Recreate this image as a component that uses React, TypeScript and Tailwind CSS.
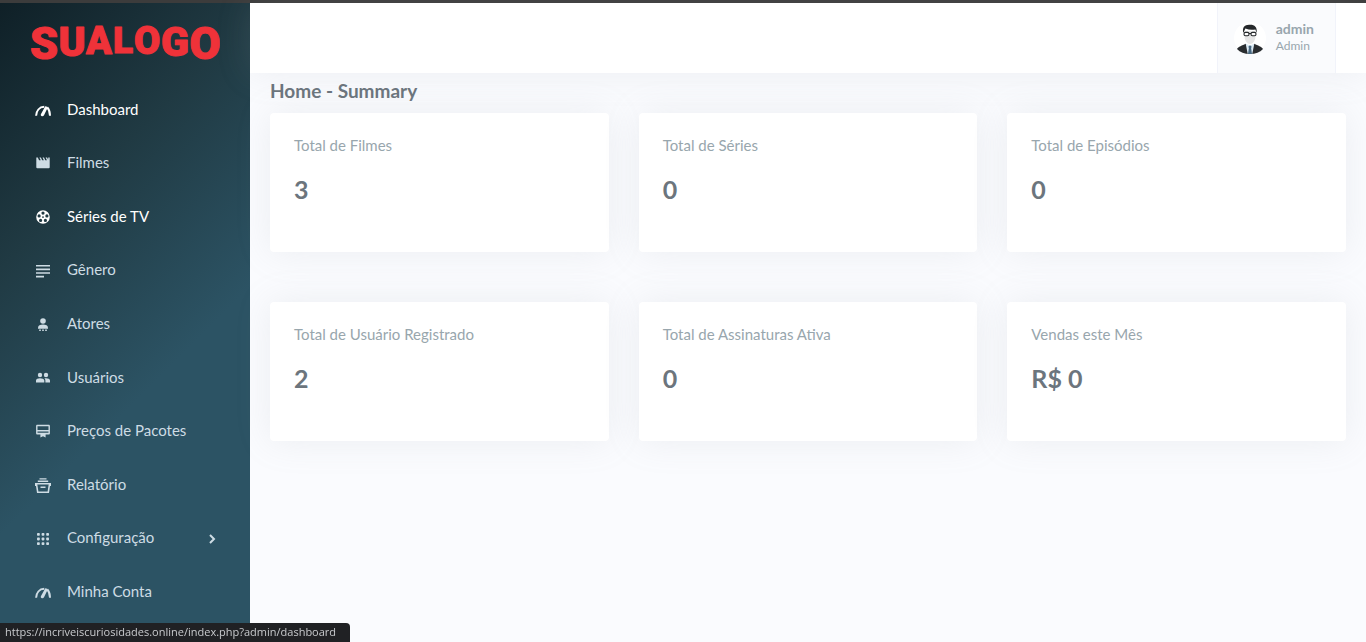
import type { ReactNode } from 'react';

type MenuItem = {
    label: string;
    icon: ReactNode;
    active?: boolean;
    hasChildren?: boolean;
};

function Icon({ children }: { children: ReactNode }) {
    return (
        <svg className="w-4 h-4 shrink-0" viewBox="0 0 16 16" fill="currentColor" aria-hidden="true">
            {children}
        </svg>
    );
}

const meterIcon = (
    <Icon>
        <g fill="none" stroke="currentColor">
            <path strokeWidth="2" d="M1.1 13.8C1.300 9 4.200 5 9.300 4.800M12.400 5.500c1.700 2 2.500 4.500 2.600 8.300" />
        </g>
        <path d="M10.300 4.200 13 4.900 9 13.200c-.5 1-1.700 1.300-2.500.8-.7-.4-.9-1.200-.5-2z" />
    </Icon>
);

const movieIcon = (
    <Icon>
        <path d="M1.3 2.6h1.5l1.3 2.6h1.6L4.4 2.6h1.5l1.3 2.6h1.6L7.5 2.6H9l1.3 2.6h1.6l-1.3-2.6h1.5l1.1 2.2V2.6h1.5v9.7a1 1 0 0 1-1 1H2.3a1 1 0 0 1-1-1z" />
    </Icon>
);

const reelIcon = (
    <Icon>
        <path
            fillRule="evenodd"
            d="M8 1.2a6.8 6.8 0 1 1 0 13.6A6.8 6.8 0 0 1 8 1.2zm0 1.3a1.6 1.6 0 1 0 0 3.2 1.6 1.6 0 0 0 0-3.2zM4.1 5.3a1.6 1.6 0 1 0 0 3.2 1.6 1.6 0 0 0 0-3.2zm7.8 0a1.6 1.6 0 1 0 0 3.2 1.6 1.6 0 0 0 0-3.2zM5.6 9.8a1.6 1.6 0 1 0 0 3.2 1.6 1.6 0 0 0 0-3.2zm4.8 0a1.6 1.6 0 1 0 0 3.2 1.6 1.6 0 0 0 0-3.2zM8 7.2a.9.9 0 1 0 0 1.8.9.9 0 0 0 0-1.8z"
        />
    </Icon>
);

const linesIcon = (
    <Icon>
        <path d="M1 2h14v1.6H1zM1 5.6h14v1.6H1zM1 9.2h14v1.6H1zM1 12.800h8v1.600H1z" />
    </Icon>
);

const actorIcon = (
    <Icon>
        <circle cx="8" cy="5" r="2.8" />
        <path d="M3 12c0-2.500 2.200-3.400 5-3.400s5 .9 5 3.400v.8H3z" />
        <path d="M4.200 13.400h1.600V15H4.200zM7.200 13.400h1.600V15H7.200zM10.200 13.400h1.600V15h-1.600z" />
    </Icon>
);

const usersIcon = (
    <Icon>
        <circle cx="5" cy="5" r="2.2" />
        <circle cx="11" cy="5" r="2.2" />
        <path d="M1 12.500v-2C1 9 3 8.200 5 8.200s4.300.8 4.300 2.300v2zM10.400 12.500v-2c0-.9-.4-1.600-1-2.200.5-.1 1-.1 1.600-.1 2 0 4 .8 4 2.300v2z" />
    </Icon>
);

const pricesIcon = (
    <Icon>
        <path
            fillRule="evenodd"
            d="M2.4 1.8h11.2c.8 0 1.3.5 1.3 1.2v7.2c0 .7-.5 1.3-1.3 1.3h-3v3L8 13.2l-2.6 1.3v-3h-3c-.8 0-1.3-.6-1.3-1.3V3c0-.7.5-1.2 1.3-1.2zM2.5 3.3v3.8h11V3.3zm0 5.2v1.3h11V8.5z"
        />
    </Icon>
);

const reportIcon = (
    <Icon>
        <path d="M4.500 1.200h7V2.600h-7zM2.800 3.600h10.400V5H2.800zM5.500 9.600h5V11h-5z" />
        <path
            fillRule="evenodd"
            d="M0 6h16v3h-1l-1 7H2L1 9H0zm2.300 1.500.2 1.100.9 5.800h9.200l.9-5.800.2-1.100z"
        />
    </Icon>
);

const gridIcon = (
    <Icon>
        {[3.4, 8, 12.6].map((y) =>
            [3.4, 8, 12.6].map((x) => <rect key={`${x}-${y}`} x={x - 1.4} y={y - 1.4} width="2.8" height="2.8" rx=".8" />)
        )}
    </Icon>
);

const menuItems: MenuItem[] = [
    { label: 'Dashboard', icon: meterIcon, active: true },
    { label: 'Filmes', icon: movieIcon },
    { label: 'Séries de TV', icon: reelIcon, active: true },
    { label: 'Gênero', icon: linesIcon },
    { label: 'Atores', icon: actorIcon },
    { label: 'Usuários', icon: usersIcon },
    { label: 'Preços de Pacotes', icon: pricesIcon },
    { label: 'Relatório', icon: reportIcon },
    { label: 'Configuração', icon: gridIcon, hasChildren: true },
    { label: 'Minha Conta', icon: meterIcon },
];

const stats = [
    { label: 'Total de Filmes', value: '3' },
    { label: 'Total de Séries', value: '0' },
    { label: 'Total de Episódios', value: '0' },
    { label: 'Total de Usuário Registrado', value: '2' },
    { label: 'Total de Assinaturas Ativa', value: '0' },
    { label: 'Vendas este Mês', value: 'R$ 0' },
];

// Letters shrink towards the middle so the word gets an arched lower edge
const logoLetters = [
    { char: 'S', x: 14, y: 56, size: 45 },
    { char: 'U', x: 42, y: 53, size: 41 },
    { char: 'A', x: 69, y: 51, size: 38 },
    { char: 'L', x: 93, y: 50, size: 37 },
    { char: 'O', x: 117, y: 51, size: 38 },
    { char: 'G', x: 145, y: 53, size: 41 },
    { char: 'O', x: 175, y: 56, size: 45 },
];

function Logo() {
    return (
        <svg className="w-[190px] h-20" viewBox="0 0 190 80" role="img" aria-label="SUALOGO">
            <text
                fill="#ef3239"
                stroke="#ef3239"
                strokeWidth="1"
                strokeLinejoin="round"
                fontWeight="900"
                textAnchor="middle"
                fontFamily="Roboto, 'Liberation Sans', sans-serif"
            >
                {logoLetters.map((l) => (
                    <tspan key={l.x} x={l.x} y={l.y} fontSize={l.size}>
                        {l.char}
                    </tspan>
                ))}
            </text>
        </svg>
    );
}

function Sidebar() {
    return (
        <aside className="w-[250px] shrink-0 flex flex-col pb-[23px] bg-[linear-gradient(135deg,#0f2027_0%,#203a43_30%,#2c5364_60%)]">
            <a href="#" className="h-20 flex items-center justify-center">
                <Logo />
            </a>
            <nav className="flex-1 flex flex-col">
                {menuItems.map((item) => (
                    <a
                        key={item.label}
                        href="#"
                        className={`flex-1 flex items-center pl-[35px] pr-[34px] text-[15px] ${item.active ? 'text-white' : 'text-[#cedce4]'}`}
                    >
                        {item.icon}
                        <span className="ml-4 flex-1 pb-0.5">{item.label}</span>
                        {item.hasChildren && (
                            <svg className="w-2 h-3" fill="none" stroke="currentColor" strokeWidth={2} viewBox="0 0 8 12">
                                <path d="M2 2l4 4-4 4" />
                            </svg>
                        )}
                    </a>
                ))}
            </nav>
        </aside>
    );
}

function Avatar() {
    return (
        <svg className="w-8 h-8" viewBox="0 0 32 32" aria-hidden="true">
            <circle cx="16" cy="16" r="16" fill="#fff" />
            <path fill="#e6e6e6" d="M10 9h12l-.5 6c-.4 4-2.700 7-5.500 7s-5.100-3-5.500-7z" />
            <path fill="#25282b" d="M9.300 11C8 5.500 10.500 3 15 2.800c5-.5 8.500 1.700 7.700 8.200l-1.300-3.600c-3 .8-6.500.6-10-.8z" />
            <g fill="#fff" stroke="#25282b" strokeWidth="1.100">
                <rect x="10" y="10.400" width="5" height="3.300" rx="1.500" />
                <rect x="17" y="10.400" width="5" height="3.300" rx="1.500" />
                <path d="M15 11.500h2" />
            </g>
            <path fill="#292c2f" d="M3 27c1-2.500 5.500-3.500 8.500-5.300L16 26l4.500-4.300C23.500 23.500 28 24.500 29 27c-3 3.500-7.500 5-13 5S6 30.500 3 27z" />
            <path fill="#dcebf5" d="M11.700 21.700 16 23.500l4.300-1.800-2 10h-4.600z" />
            <path fill="#47667f" d="m16 23.300 1.700 1.500-.6 1.200.9 6h-4l.9-6-.6-1.200z" />
        </svg>
    );
}

function Topbar() {
    return (
        <header className="h-[70px] bg-white flex justify-end pr-[30px] shadow-[0_0_35px_0_rgba(154,161,171,0.15)]">
            <button className="flex items-center gap-2.5 pl-4 pr-[21px] text-left bg-[#fafbfd] border-x border-[#f1f3fa] text-[#98a6ad]">
                <Avatar />
                <span className="block">
                    <span className="block text-sm leading-4 font-bold">admin</span>
                    <span className="block text-xs leading-[18px]">Admin</span>
                </span>
            </button>
        </header>
    );
}

function StatCard({ label, value }: { label: string; value: string }) {
    return (
        <div className="h-[139px] p-6 bg-white rounded-[4px] shadow-[0_0_35px_0_rgba(154,161,171,0.15)]">
            <h5 className="text-[15px] leading-4 text-[#98a6ad]">{label}</h5>
            <h3 className="mt-5 text-[25px] leading-8 font-bold text-[#6c757d]">{value}</h3>
        </div>
    );
}

export default function App() {
    return (
        <div className="min-h-screen flex flex-col bg-[#fafbfe] font-['Lato','Open_Sans',sans-serif]">
            <div className="h-[3px] bg-[#3c3c3c]" />
            <div className="flex-1 flex">
                <Sidebar />
                <div className="flex-1 min-w-0 flex flex-col">
                    <Topbar />
                    <main className="px-5">
                        <h4 className="h-10 pt-2 text-[19px] leading-5 font-bold text-[#6c757d]">Home - Summary</h4>
                        <div className="grid grid-cols-3 gap-x-[30px] gap-y-[50px]">
                            {stats.map((s) => (
                                <StatCard key={s.label} label={s.label} value={s.value} />
                            ))}
                        </div>
                    </main>
                </div>
            </div>
            <div className="fixed left-0 bottom-0 h-[19px] pl-[5px] pr-3.5 flex items-center bg-[#202124] rounded-tr-[4px] text-[11px] text-[#c8cacd] font-['Open_Sans',sans-serif]">
                https://incriveiscuriosidades.online/index.php?admin/dashboard
            </div>
        </div>
    );
}
